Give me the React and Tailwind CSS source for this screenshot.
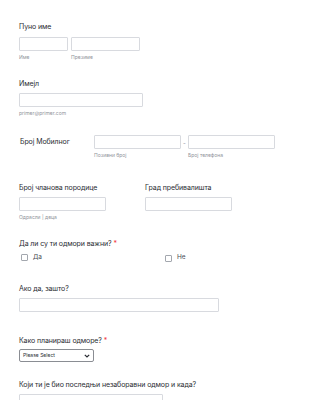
import React from 'react';

const font = { fontFamily: 'Inter, "Noto Sans", sans-serif' };

const Label = ({ children, required, className = '' }) => (
  <div className={`text-[7px] leading-[10px] font-normal tracking-[-0.1px] whitespace-nowrap text-[#2a2d33] ${className}`}>
    {children}
    {required && <span className="text-[#f23a3c] ml-[2px]">*</span>}
  </div>
);

const Sub = ({ children, className = '' }) => (
  <div className={`text-[5px] leading-[8px] whitespace-nowrap text-[#8f939a] ${className}`}>{children}</div>
);

const Input = ({ className = '' }) => (
  <div className={`h-[14px] border border-[#d8dadf] rounded-[1px] bg-white ${className}`} />
);

const Check = ({ label }) => (
  <div className="flex items-center gap-[5px]">
    <div className="w-[7px] h-[7px] border border-[#a3a7ae] rounded-[1px]" />
    <span className="text-[6.5px] text-[#4a4e55]">{label}</span>
  </div>
);

export default function App() {
  return (
    <div className="w-[325px] h-[400px] bg-white overflow-hidden pl-[19px] pt-[22px]" style={font}>
      <Label>Пуно име</Label>
      <div className="flex gap-[3px] mt-[5px]">
        <div className="w-[49px]">
          <Input className="h-[13px]" />
          <Sub className="mt-[2px]">Име</Sub>
        </div>
        <div className="w-[69px]">
          <Input className="h-[13px]" />
          <Sub className="mt-[2px]">Презиме</Sub>
        </div>
      </div>

      <Label className="mt-[18px]">Имејл</Label>
      <Input className="w-[124px] mt-[4px]" />
      <Sub className="mt-[2px]">primer@primer.com</Sub>

      <div className="flex mt-[18px]">
        <div className="w-[75px] h-[14px] flex items-center pl-[1px]">
          <Label>Број Мобилног</Label>
        </div>
        <div className="w-[87px]">
          <Input />
          <Sub className="mt-[2px]">Позивни број</Sub>
        </div>
        <div className="w-[7px] h-[14px] flex items-center justify-center text-[6px] text-[#8f939a]">-</div>
        <div className="w-[87px]">
          <Input />
          <Sub className="mt-[2px]">Број телефона</Sub>
        </div>
      </div>

      <div className="flex gap-[39px] mt-[24px]">
        <div className="w-[87px]">
          <Label>Број чланова породице</Label>
          <Input className="mt-[4px]" />
          <Sub className="mt-[2px]">Одрасли | деца</Sub>
        </div>
        <div className="w-[87px]">
          <Label>Град пребивалишта</Label>
          <Input className="mt-[4px]" />
        </div>
      </div>

      <Label required className="mt-[18px]">Да ли су ти одмори важни?</Label>
      <div className="flex mt-[4px] h-[10px] pl-[2px]">
        <div className="w-[144px]"><Check label="Да" /></div>
        <Check label="Не" />
      </div>

      <Label className="mt-[21px]">Ако да, зашто?</Label>
      <Input className="w-[200px] mt-[4px]" />

      <Label required className="mt-[24px]">Како планираш одморе?</Label>
      <div className="w-[75px] h-[13px] mt-[3px] border border-[#8a8d93] rounded-[2px] flex items-center justify-between px-[3px]">
        <span className="text-[5px] text-[#2a2d33]">Please Select</span>
        <svg width="6" height="4" viewBox="0 0 6 4">
          <path d="M0.8 0.8 L3 3 L5.2 0.8" fill="none" stroke="#2a2d33" strokeWidth="1.2" />
        </svg>
      </div>

      <Label className="mt-[18px]">Који ти је био последњи незаборавни одмор и када?</Label>
      <Input className="w-[144px] mt-[4px] h-[20px]" />
    </div>
  );
}
